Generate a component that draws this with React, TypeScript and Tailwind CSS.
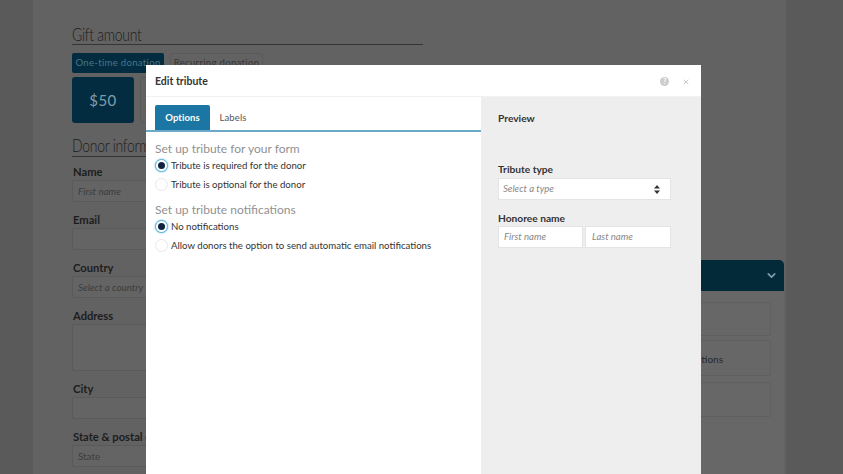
import { ChevronDown, X } from "lucide-react";

const lato = "font-['Lato','Open_Sans',sans-serif]";

function BgField({ label, placeholder, h = "h-[22px]", plain }: { label: string; placeholder?: string; h?: string; plain?: boolean }) {
  return (
    <div className="mb-[10px]">
      <div className="ml-[1px] h-[16px] text-[11.2px] leading-[16px] font-bold text-[#1d1d1d]">{label}</div>
      <div className={`${h} w-[351px] rounded-[2px] border border-[#5a5a5a] bg-[#646464] pl-[5px] text-[9.8px] leading-[20px] text-[#3d3d3d] ${plain ? "" : "italic"}`}>
        {placeholder}
      </div>
    </div>
  );
}

function Radio({ checked, label }: { checked?: boolean; label: string }) {
  return (
    <div className="flex h-[19px] items-center gap-[3px]">
      {checked ? (
        <span className="flex h-[13px] w-[13px] items-center justify-center rounded-full border border-[#5fb3d9] bg-white shadow-[0_0_2px_#5fb3d9]">
          <span className="h-[7px] w-[7px] rounded-full bg-[#12233f]" />
        </span>
      ) : (
        <span className="h-[13px] w-[13px] rounded-full border border-[#e8e8e8] bg-white" />
      )}
      <span className="text-[9.65px] text-[#333333]">{label}</span>
    </div>
  );
}

function BgHeading({ children, className }: { children: string; className: string }) {
  return (
    <div className={`${className} w-[351px] overflow-hidden whitespace-nowrap border-b border-[#353535] text-[17px] font-light tracking-[-0.3px] text-[#1c1c1c]`}>
      <span className="inline-block origin-left scale-x-[0.82]">{children}</span>
    </div>
  );
}

export default function App() {
  return (
    <div className={`${lato} relative h-[474px] w-[843px] overflow-hidden bg-[#5a5a5a]`}>
      {/* dimmed page behind the dialog */}
      <div className="ml-[33px] flex h-full w-[753px] bg-[#626262] pl-[39px] pt-[24px]">
        <div className="w-[351px] shrink-0">
          <BgHeading className="h-[21px] leading-[22px]">Gift amount</BgHeading>
          <div className="mt-[8px] flex gap-[6px]">
            <div className="flex h-[20px] w-[92px] items-center justify-center overflow-hidden whitespace-nowrap rounded-[2px] bg-[#032c40] text-[9.6px] tracking-[0.3px] text-[#4a7587]">
              One-time donation
            </div>
            <div className="flex h-[20px] w-[93px] items-center justify-center rounded-[2px] border border-[#5a5a5a] text-[9.6px] tracking-[0.3px] text-[#363636]">
              Recurring donation
            </div>
          </div>
          <div className="mt-[4px] flex gap-[6px]">
            <div className="flex h-[46px] w-[62px] items-center justify-center rounded-[3px] bg-[#032c40] text-[15px] tracking-[0.5px] text-[#7f9eac]">
              $50
            </div>
            <div className="h-[46px] w-[62px] rounded-[3px] border border-[#5a5a5a]" />
          </div>
          <BgHeading className="mt-[12px] h-[22px] leading-[21px]">Donor information</BgHeading>
          <div className="mt-[7px]">
            <BgField label="Name" placeholder="First name" />
            <BgField label="Email" />
            <BgField label="Country" placeholder="Select a country" />
            <BgField label="Address" h="h-[47px]" />
            <BgField label="City" />
            <BgField label="State & postal code" placeholder="State" plain />
          </div>
        </div>
        <div className="ml-[8px] mr-[2px] mt-[236px] flex flex-1 flex-col">
          <div className="flex h-[31px] shrink-0 items-center justify-end rounded-t-[5px] bg-[#022a38] pr-[6px]">
            <ChevronDown size={13} strokeWidth={3} className="text-[#7f9eac]" />
          </div>
          <div className="flex flex-1 flex-col bg-[#676767] pl-[8px] pr-[13px] pt-[11px]">
            <div className="h-[34px] rounded-[2px] border border-[#606060]" />
            <div className="mt-[4px] flex h-[36px] items-center justify-end rounded-[2px] border border-[#606060] pr-[47px] pt-[3px] text-[10px] text-[#282828]">
              Notifications
            </div>
            <div className="mt-[6px] h-[35px] rounded-[2px] border border-[#606060]" />
          </div>
        </div>
      </div>

      {/* dialog */}
      <div className="absolute bottom-0 left-[146px] top-[65px] flex w-[555px] flex-col bg-white">
        <div className="flex h-[32px] shrink-0 items-center justify-between border-b border-[#f2f2f2] pl-[9px] pr-[11px] pt-[2px]">
          <span className="text-[10.5px] font-bold text-[#333333]">Edit tribute</span>
          <div className="flex items-center gap-[13px]">
            <span className="flex h-[9px] w-[9px] items-center justify-center rounded-full bg-[#cccccc] text-[7px] font-bold leading-none text-white">?</span>
            <X size={8} strokeWidth={3} className="text-[#c8c8c8]" />
          </div>
        </div>
        <div className="flex flex-1">
          <div className="w-[335px] shrink-0 pt-[8px]">
            <div className="flex h-[27px] items-stretch border-b-2 border-[#6aa9c8] pl-[9px]">
              <div className="flex w-[55px] items-center justify-center rounded-t-[2px] bg-[#1b76a3] pt-[1px] text-[9.5px] font-bold tracking-[0.1px] text-white">
                Options
              </div>
              <div className="flex w-[46px] items-center justify-center pt-[1px] text-[9.5px] tracking-[0.1px] text-[#555555]">
                Labels
              </div>
            </div>
            <div className="pl-[9px] pt-[10px]">
              <div className="h-[14px] text-[12px] leading-[14px] text-[#919191]">Set up tribute for your form</div>
              <Radio checked label="Tribute is required for the donor" />
              <Radio label="Tribute is optional for the donor" />
              <div className="mt-[8px] h-[15px] text-[12px] leading-[15px] text-[#919191]">Set up tribute notifications</div>
              <Radio checked label="No notifications" />
              <Radio label="Allow donors the option to send automatic email notifications" />
            </div>
          </div>
          <div className="flex-1 bg-[#eeeeee] pl-[17px] pr-[30px] pt-[14px]">
            <div className="text-[10.2px] font-bold text-[#333333]">Preview</div>
            <div className="mt-[35px] h-[17px] text-[10.2px] font-bold leading-[16px] text-[#333333]">Tribute type</div>
            <div className="flex h-[22px] items-center justify-between border border-[#e4e4e4] bg-white pl-[4px] pr-[10px] text-[9.6px] italic text-[#888888]">
              <span>Select a type</span>
              <svg width="6" height="9" viewBox="0 0 6 9" className="text-[#333333]">
                <path d="M3 0 L6 3.6 H0 Z M0 5.4 H6 L3 9 Z" fill="currentColor" />
              </svg>
            </div>
            <div className="mt-[10px] h-[16px] text-[10.2px] font-bold leading-[16px] text-[#333333]">Honoree name</div>
            <div className="flex gap-[2px]">
              <div className="flex h-[22px] flex-1 items-center border border-[#e4e4e4] bg-white pl-[5px] text-[9.6px] italic text-[#888888]">First name</div>
              <div className="flex h-[22px] flex-1 items-center border border-[#e4e4e4] bg-white pl-[6px] text-[9.6px] italic text-[#888888]">Last name</div>
            </div>
          </div>
        </div>
      </div>
    </div>
  );
}
